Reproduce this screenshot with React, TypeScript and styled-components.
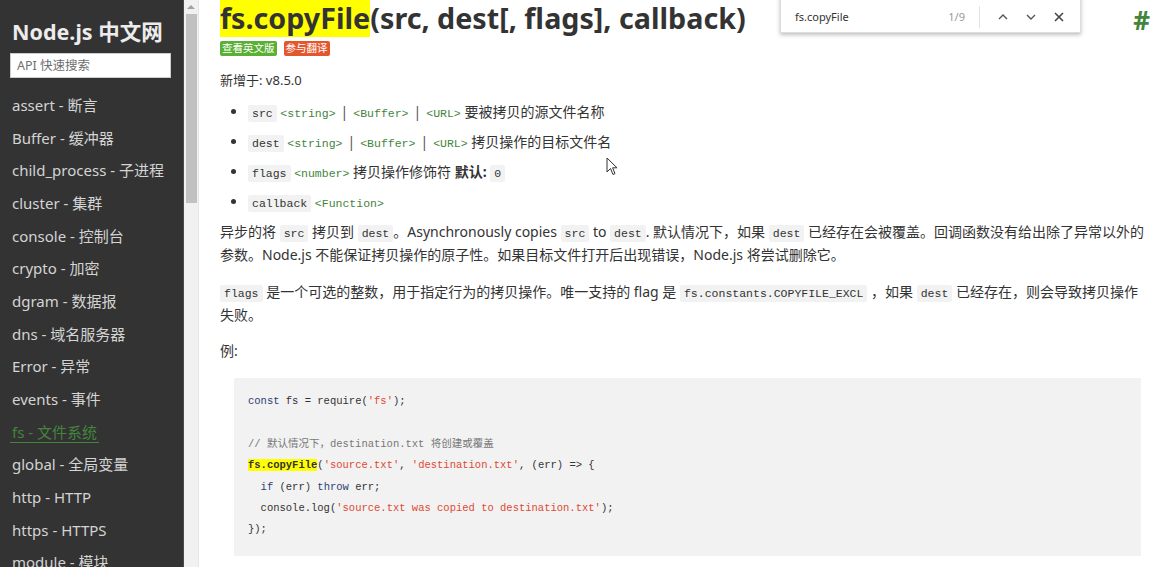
import styled, { createGlobalStyle } from "styled-components";

const GlobalStyle = createGlobalStyle`
  html, body {
    margin: 0;
    padding: 0;
    background: #fff;
  }
  body {
    font-family: "Noto Sans", "Noto Sans CJK SC", sans-serif;
    color: #333;
  }
  * {
    box-sizing: border-box;
  }
`;

const mono = `"Liberation Mono", "Noto Sans CJK SC", monospace`;

const Page = styled.div`
  display: flex;
  width: 1162px;
  height: 567px;
  overflow: hidden;
`;

const Sidebar = styled.aside`
  width: 184px;
  flex-shrink: 0;
  background: #333;
  border-right: 1px solid #4a4a4a;
  padding: 18px 0 0 10px;
`;

const Logo = styled.div`
  font-size: 21.5px;
  font-weight: 700;
  line-height: 28px;
  color: #ececec;
  padding-left: 2px;
`;

const Search = styled.input`
  display: block;
  margin-top: 7px;
  width: 161px;
  height: 25px;
  border: 1px solid #ccc;
  padding: 0 6px;
  font-family: "Noto Sans", "Noto Sans CJK SC", sans-serif;
  font-size: 12.5px;
  outline: none;
  &::placeholder {
    color: #6e6e6e;
  }
`;

const NavList = styled.ul`
  list-style: none;
  margin: 11px 0 0;
  padding: 0;
`;

const NavItem = styled.li`
  height: 32.7px;
  display: flex;
  align-items: center;
`;

const NavLink = styled.a<{ $active?: boolean }>`
  font-size: 15px;
  line-height: 20px;
  padding: 0 2px;
  text-decoration: none;
  color: ${(p) => (p.$active ? "#43853d" : "#d4d4d4")};
  border-bottom: 1px solid ${(p) => (p.$active ? "#43853d" : "transparent")};
`;

const Scrollbar = styled.div`
  width: 15px;
  flex-shrink: 0;
  background: #f1f1f1;
  border-right: 1px solid #e6e6e6;
  display: flex;
  flex-direction: column;
  align-items: center;
`;

const ScrollArrow = styled.div`
  width: 0;
  height: 0;
  margin-top: 5px;
  border-left: 4px solid transparent;
  border-right: 4px solid transparent;
  border-bottom: 4px solid #a3a3a3;
`;

const ScrollThumb = styled.div`
  margin-top: 5px;
  width: 11px;
  height: 189px;
  background: #c1c1c1;
`;

const Main = styled.main`
  position: relative;
  flex: 1;
  padding: 0 12px 0 21px;
  font-size: 14px;
`;

const TitleRow = styled.div`
  display: flex;
  justify-content: space-between;
  align-items: flex-start;
`;

const Title = styled.h1`
  margin: 0;
  font-size: 28.7px;
  line-height: 36px;
  font-weight: 700;
  color: #333;
`;

const Mark = styled.span`
  background: #ffff00;
`;

const Anchor = styled.a`
  margin-top: 5px;
  font-size: 26px;
  line-height: 30px;
  font-weight: 700;
  color: #43853d;
  text-decoration: none;
  padding-right: 0;
`;

const Badges = styled.div`
  display: flex;
  gap: 7px;
  margin-top: 5px;
`;

const Badge = styled.span<{ $color: string }>`
  background: ${(p) => p.$color};
  color: #fff;
  font-size: 10.5px;
  line-height: 15px;
  height: 15px;
  padding: 0 2px;
  border-radius: 2px;
`;

const Added = styled.div`
  margin-top: 13px;
  font-size: 13px;
  line-height: 23px;
`;

const Params = styled.ul`
  margin: 5px 0 0;
  padding-left: 28px;
  list-style: disc;
`;

const Param = styled.li`
  height: 30px;
  line-height: 30px;
  font-size: 14px;
`;

const Code = styled.code`
  font-family: ${mono};
  font-size: 11.5px;
  line-height: 1;
  background: #f2f2f2;
  padding: 2px 4px;
  border-radius: 2px;
  color: #333;
`;

const Type = styled.span`
  font-family: ${mono};
  font-size: 11.5px;
  line-height: 1;
  color: #43853d;
`;

const Sep = styled.span`
  color: #555;
  margin: 0 5px;
`;

const Para = styled.p`
  margin: 3px 0 13.5px;
  line-height: 23px;
  font-size: 14px;
`;

const Pre = styled.pre`
  margin: 16px 9px 0 14px;
  padding: 13px 14px 15px;
  background: #f2f2f2;
  font-family: ${mono};
  font-size: 10.5px;
  line-height: 21.4px;
  color: #333;
`;

const Kw = styled.span`
  color: #2b3f74;
`;

const Str = styled.span`
  color: #dd4a33;
`;

const Comment = styled.span`
  color: #777;
`;

const CodeMark = styled.span`
  background: #ffff00;
  font-weight: 700;
`;

const FindBar = styled.div`
  position: absolute;
  top: -6px;
  left: 581px;
  width: 301px;
  height: 39px;
  background: #fff;
  border: 1px solid #ddd;
  box-shadow: 0 2px 4px rgba(0, 0, 0, 0.25);
  display: flex;
  align-items: center;
  padding: 6px 0 0 14px;
  font-size: 11px;
`;

const FindText = styled.span`
  flex: 1;
  color: #333;
`;

const FindCount = styled.span`
  color: #999;
  padding-right: 14px;
  border-right: 1px solid #e3e3e3;
  line-height: 22px;
`;

const FindButtons = styled.div`
  display: flex;
  align-items: center;
  gap: 14px;
  padding: 0 14px 0 16px;
  color: #555;
`;

const Cursor = styled.svg`
  position: absolute;
  left: 407px;
  top: 157px;
`;

const navItems = [
  "assert - 断言",
  "Buffer - 缓冲器",
  "child_process - 子进程",
  "cluster - 集群",
  "console - 控制台",
  "crypto - 加密",
  "dgram - 数据报",
  "dns - 域名服务器",
  "Error - 异常",
  "events - 事件",
  "fs - 文件系统",
  "global - 全局变量",
  "http - HTTP",
  "https - HTTPS",
  "module - 模块",
];

const Chevron = ({ up }: { up?: boolean }) => (
  <svg width="14" height="14" viewBox="0 0 14 14" fill="none" stroke="#555" strokeWidth="1.4">
    <path d={up ? "M3 9 L7 5 L11 9" : "M3 5 L7 9 L11 5"} />
  </svg>
);

const App = () => {
  return (
    <>
      <GlobalStyle />
      <Page>
        <Sidebar>
          <Logo>Node.js 中文网</Logo>
          <Search placeholder="API 快速搜索" />
          <NavList>
            {navItems.map((item) => (
              <NavItem key={item}>
                <NavLink href="#" $active={item.startsWith("fs ")}>
                  {item}
                </NavLink>
              </NavItem>
            ))}
          </NavList>
        </Sidebar>
        <Scrollbar>
          <ScrollArrow />
          <ScrollThumb />
        </Scrollbar>
        <Main>
          <TitleRow>
            <Title>
              <Mark>fs.copyFile</Mark>(src, dest[, flags], callback)
            </Title>
            <Anchor href="#">#</Anchor>
          </TitleRow>
          <Badges>
            <Badge $color="#5ab033">查看英文版</Badge>
            <Badge $color="#e4572e">参与翻译</Badge>
          </Badges>
          <Added>新增于: v8.5.0</Added>
          <Params>
            <Param>
              <Code>src</Code> <Type>&lt;string&gt;</Type>
              <Sep>|</Sep>
              <Type>&lt;Buffer&gt;</Type>
              <Sep>|</Sep>
              <Type>&lt;URL&gt;</Type> 要被拷贝的源文件名称
            </Param>
            <Param>
              <Code>dest</Code> <Type>&lt;string&gt;</Type>
              <Sep>|</Sep>
              <Type>&lt;Buffer&gt;</Type>
              <Sep>|</Sep>
              <Type>&lt;URL&gt;</Type> 拷贝操作的目标文件名
            </Param>
            <Param>
              <Code>flags</Code> <Type>&lt;number&gt;</Type> 拷贝操作修饰符 <b>默认:</b> <Code>0</Code>
            </Param>
            <Param>
              <Code>callback</Code> <Type>&lt;Function&gt;</Type>
            </Param>
          </Params>
          <Para>
            异步的将 <Code>src</Code> 拷贝到 <Code>dest</Code>。Asynchronously copies <Code>src</Code> to{" "}
            <Code>dest</Code>. 默认情况下，如果 <Code>dest</Code>{" "}
            已经存在会被覆盖。回调函数没有给出除了异常以外的参数。Node.js 不能保证拷贝操作的原子性。如果目标文件打开后出现错误，Node.js 将尝试删除它。
          </Para>
          <Para>
            <Code>flags</Code> 是一个可选的整数，用于指定行为的拷贝操作。唯一支持的 flag 是{" "}
            <Code>fs.constants.COPYFILE_EXCL</Code> ，如果 <Code>dest</Code> 已经存在，则会导致拷贝操作失败。
          </Para>
          <Para>例:</Para>
          <Pre>
            <Kw>const</Kw> fs = require(<Str>'fs'</Str>);{"\n"}
            {"\n"}
            <Comment>// 默认情况下，destination.txt 将创建或覆盖</Comment>
            {"\n"}
            <CodeMark>fs.copyFile</CodeMark>(<Str>'source.txt'</Str>, <Str>'destination.txt'</Str>, (err) =&gt; {"{"}
            {"\n"}
            {"  "}
            <Kw>if</Kw> (err) <Kw>throw</Kw> err;{"\n"}
            {"  "}console.log(<Str>'source.txt was copied to destination.txt'</Str>);{"\n"}
            {"}"});
          </Pre>
          <FindBar>
            <FindText>fs.copyFile</FindText>
            <FindCount>1/9</FindCount>
            <FindButtons>
              <Chevron up />
              <Chevron />
              <svg width="14" height="14" viewBox="0 0 14 14" stroke="#444" strokeWidth="1.6">
                <path d="M3 3 L11 11 M11 3 L3 11" />
              </svg>
            </FindButtons>
          </FindBar>
          <Cursor width="12" height="19" viewBox="0 0 12 19">
            <path d="M1 1 L1 15 L4.5 11.5 L7 17.5 L9 16.6 L6.6 10.8 L11 10.8 Z" fill="#fff" stroke="#333" strokeWidth="1" />
          </Cursor>
        </Main>
      </Page>
    </>
  );
};

export default App;
